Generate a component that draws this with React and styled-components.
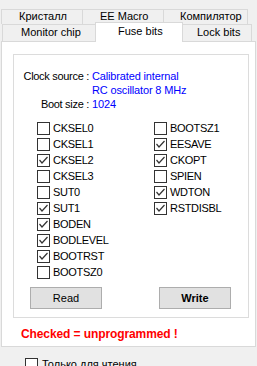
import React from 'react'
import styled, { createGlobalStyle } from 'styled-components'

const GlobalStyle = createGlobalStyle`
  html, body {
    margin: 0;
    padding: 0;
    background: #f0f0f0;
  }
  body {
    font-family: "Liberation Sans", Arial, sans-serif;
    font-size: 11px;
    color: #000;
  }
`

const Window = styled.div`
  width: 257px;
  height: 366px;
  overflow: hidden;
  background: #f0f0f0;
  padding-top: 9px;
  box-sizing: border-box;
`

const TabRow = styled.div`
  display: flex;
  margin-left: ${(p) => p.$left}px;
  height: ${(p) => p.$height}px;
`

const Tab = styled.div`
  position: relative;
  box-sizing: border-box;
  width: ${(p) => p.$width}px;
  height: ${(p) => p.$height}px;
  margin-left: -1px;
  padding-left: ${(p) => p.$pad}px;
  line-height: ${(p) => p.$height - 2}px;
  border: 1px solid #d9d9d9;
  border-bottom: none;
  background: #f0f0f0;
  white-space: nowrap;

  &:first-child {
    margin-left: 0;
  }
`

const ActiveTab = styled(Tab)`
  z-index: 1;
  background: #fff;
  margin-top: -2px;
  margin-left: -3px;
  margin-right: -2px;
  height: ${(p) => p.$height + 3}px;
  line-height: ${(p) => p.$height}px;
`

const Panel = styled.div`
  margin: 0 1px 0 1px;
  height: 306px;
  box-sizing: border-box;
  background: #fff;
  border: 1px solid #d9d9d9;
  padding: 12px 0 0 11px;
`

const GroupBox = styled.div`
  width: 236px;
  height: 264px;
  box-sizing: border-box;
  border: 1px solid #dcdcdc;
  padding-top: 14px;
`

const InfoGrid = styled.div`
  display: grid;
  grid-template-columns: 75px 1fr;
  column-gap: 3px;
  line-height: 14px;
`

const InfoLabel = styled.div`
  text-align: right;
  white-space: nowrap;
  letter-spacing: -0.3px;
`

const InfoValue = styled.div`
  color: #0000ff;
  white-space: nowrap;
  letter-spacing: -0.15px;
`

const FuseGrid = styled.div`
  display: grid;
  grid-template-columns: 117px 1fr;
  grid-auto-flow: column;
  grid-template-rows: repeat(10, 16px);
  margin-top: 9px;
  padding-left: 23px;
`

const FuseItem = styled.label`
  display: flex;
  align-items: center;
  gap: 3px;
  letter-spacing: -0.3px;
  white-space: nowrap;
`

const Box = styled.span`
  width: 13px;
  height: 13px;
  box-sizing: border-box;
  border: 1px solid #333;
  background: #fff;
  display: flex;
  align-items: center;
  justify-content: center;
  flex: none;
`

const ButtonRow = styled.div`
  display: flex;
  gap: 57px;
  padding-left: 16px;
  margin-top: 7px;
`

const Button = styled.button`
  width: 72px;
  height: 22px;
  box-sizing: border-box;
  border: 1px solid #adadad;
  background: #e1e1e1;
  font-family: "Liberation Sans", Arial, sans-serif;
  font-size: 11px;
  font-weight: ${(p) => (p.$bold ? 700 : 400)};
  color: #000;
  padding: 0;
`

const Warning = styled.div`
  margin: 9px 0 0 8px;
  color: #ff0000;
  font-weight: 700;
  font-size: 12px;
  letter-spacing: -0.1px;
  line-height: 14px;
`

const Footer = styled.div`
  display: flex;
  align-items: center;
  gap: 4px;
  padding: 11px 0 0 25px;
  line-height: 13px;
`

const Check = ({ on }) => (
  <Box>
    {on && (
      <svg width="11" height="11" viewBox="0 0 11 11">
        <polyline points="1.5,5 4,8 9.5,2" fill="none" stroke="#333" strokeWidth="1.2" />
      </svg>
    )}
  </Box>
)

const fuses = [
  ['CKSEL0', false],
  ['CKSEL1', false],
  ['CKSEL2', true],
  ['CKSEL3', false],
  ['SUT0', false],
  ['SUT1', true],
  ['BODEN', true],
  ['BODLEVEL', true],
  ['BOOTRST', true],
  ['BOOTSZ0', false],
  ['BOOTSZ1', false],
  ['EESAVE', true],
  ['CKOPT', true],
  ['SPIEN', false],
  ['WDTON', true],
  ['RSTDISBL', true],
]

export default function App() {
  return (
    <Window>
      <GlobalStyle />
      <TabRow $left={1} $height={15}>
        <Tab $width={82} $height={15} $pad={17}>Кристалл</Tab>
        <Tab $width={82} $height={15} $pad={17}>EE Macro</Tab>
        <Tab $width={85} $height={15} $pad={16}>Компилятор</Tab>
      </TabRow>
      <TabRow $left={2} $height={17}>
        <Tab $width={96} $height={17} $pad={18}>Monitor chip</Tab>
        <ActiveTab $width={88} $height={17} $pad={22}>Fuse bits</ActiveTab>
        <Tab $width={72} $height={17} $pad={16}>Lock bits</Tab>
      </TabRow>
      <Panel>
        <GroupBox>
          <InfoGrid>
            <InfoLabel>Clock source :</InfoLabel>
            <InfoValue>Calibrated internal</InfoValue>
            <InfoLabel />
            <InfoValue>RC oscillator 8 MHz</InfoValue>
            <InfoLabel>Boot size :</InfoLabel>
            <InfoValue>1024</InfoValue>
          </InfoGrid>
          <FuseGrid>
            {fuses.map(([name, on]) => (
              <FuseItem key={name}>
                <Check on={on} />
                {name}
              </FuseItem>
            ))}
          </FuseGrid>
          <ButtonRow>
            <Button>Read</Button>
            <Button $bold>Write</Button>
          </ButtonRow>
        </GroupBox>
        <Warning>Checked = unprogrammed !</Warning>
      </Panel>
      <Footer>
        <Check on={false} />
        Только для чтения
      </Footer>
    </Window>
  )
}
